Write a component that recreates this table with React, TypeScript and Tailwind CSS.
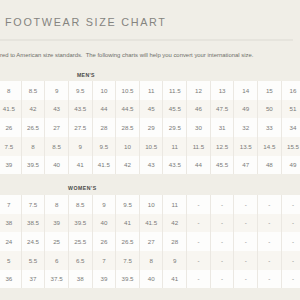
import React from "react";

const men: string[][] = [
  ["8", "8.5", "9", "9.5", "10", "10.5", "11", "11.5", "12", "13", "14", "15", "16"],
  ["41.5", "42", "43", "43.5", "44", "44.5", "45", "45.5", "46", "47.5", "49", "50", "51"],
  ["26", "26.5", "27", "27.5", "28", "28.5", "29", "29.5", "30", "31", "32", "33", "34"],
  ["7.5", "8", "8.5", "9", "9.5", "10", "10.5", "11", "11.5", "12.5", "13.5", "14.5", "15.5"],
  ["39", "39.5", "40", "41", "41.5", "42", "43", "43.5", "44", "45.5", "47", "48", "49"],
];

const women: string[][] = [
  ["7", "7.5", "8", "8.5", "9", "9.5", "10", "11", "-", "-", "-", "-", "-"],
  ["38", "38.5", "39", "39.5", "40", "41", "41.5", "42", "-", "-", "-", "-", "-"],
  ["24", "24.5", "25", "25.5", "26", "26.5", "27", "28", "-", "-", "-", "-", "-"],
  ["5", "5.5", "6", "6.5", "7", "7.5", "8", "9", "-", "-", "-", "-", "-"],
  ["36", "37", "37.5", "38", "39", "39.5", "40", "41", "-", "-", "-", "-", "-"],
];

function Table({ rows }: { rows: string[][] }) {
  return (
    <div className="ml-[-3px] flex flex-col">
      {rows.map((r, i) => (
        <div
          key={i}
          className={`flex h-[18.7px] ${i % 2 === 1 ? "bg-[#f8f6f1]" : "bg-[#fdfdfc]"}`}
        >
          {r.map((v, j) => (
            <div
              key={j}
              className={`flex w-[23.65px] shrink-0 items-center justify-center text-[6.2px] text-[#7a7a78] ${
                j > 0 ? "border-l border-[#ebe8e2]" : ""
              }`}
            >
              {v}
            </div>
          ))}
        </div>
      ))}
    </div>
  );
}

export default function App() {
  return (
    <div
      className="h-[300px] w-[300px] overflow-hidden bg-[#f0eee7]"
      style={{ fontFamily: '"Liberation Sans", Arial, sans-serif' }}
    >
      <div className="flex h-[39px] items-center pl-[5px] pt-[5px]">
        <span className="text-[10.8px] leading-none tracking-[1.7px] text-[#85847f]">
          FOOTWEAR SIZE CHART
        </span>
      </div>
      <div className="mr-[7px] h-[2px] bg-[#e6e4dd]" />
      <div className="flex h-[29px] items-center">
        <span className="whitespace-nowrap text-[5.9px] leading-none text-[#6f6e6a]">
          red to American size standards.&nbsp; The following charts will help you convert your international size.
        </span>
      </div>
      <div className="flex h-[11px] items-center">
        <span className="ml-[77px] text-[5.2px] font-bold leading-none tracking-[0.3px] text-[#4a4a48]">
          MEN'S
        </span>
      </div>
      <Table rows={men} />
      <div className="flex h-[20.5px] items-center pt-[8px]">
        <span className="ml-[68px] text-[5.2px] font-bold leading-none tracking-[0.5px] text-[#4a4a48]">
          WOMEN'S
        </span>
      </div>
      <Table rows={women} />
    </div>
  );
}
